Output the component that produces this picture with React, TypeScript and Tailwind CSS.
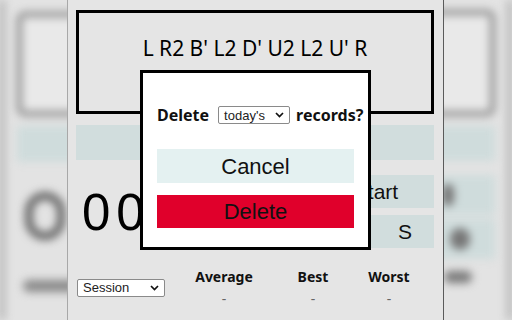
import React from "react";

const Chevron = () => (
  <svg width="9" height="6" viewBox="0 0 9 6" className="shrink-0">
    <path d="M1 1 L4.5 4.5 L8 1" fill="none" stroke="#111" strokeWidth="1.7" />
  </svg>
);

function FakeSelect({ label, w }: { label: string; w: string }) {
  return (
    <div
      className={`${w} flex items-center justify-between bg-white border border-[#8a8a8a] rounded-[2px] pl-[5px] pr-[5px] text-[13px] font-normal leading-none text-[#222]`}
      style={{ fontFamily: '"Liberation Sans", Arial, sans-serif' }}
    >
      <span>{label}</span>
      <Chevron />
    </div>
  );
}

function Stat({ title, w }: { title: string; w: string }) {
  return (
    <div className={`${w} flex flex-col items-center gap-[3px]`}>
      <div className="text-[14px] font-bold leading-[19px] text-[#111]">{title}</div>
      <div className="text-[14px] leading-[19px] text-[#666]">-</div>
    </div>
  );
}

export default function App() {
  return (
    <div
      className="w-[512px] h-[320px] flex overflow-hidden bg-[#e3e3e3]"
      style={{ fontFamily: '"Noto Sans", sans-serif' }}
    >
      {/* left blurred strip */}
      <div className="w-[67px] h-full overflow-hidden shrink-0">
        <div className="h-full flex flex-col pl-[12px] blur-[4px] border-l-[6px] border-[#b5b5b5] -ml-[1px]">
          <div className="mt-[12px] h-[104px] -mr-[12px] rounded-l-[8px] border-[5px] border-r-0 border-[#8a8a8a] bg-[#e9e9e9]" />
          <div className="mt-[10px] h-[36px] -mr-[12px] bg-[#cfdcdc]" />
          <div className="mt-[30px] ml-[8px] w-[40px] h-[48px] rounded-full border-[8px] border-[#666]" />
          <div className="mt-[40px] ml-[6px] -mr-[12px] h-[12px] rounded-full bg-[#8a8a8a]" />
        </div>
      </div>

      {/* central panel */}
      <div className="relative w-[377px] h-full shrink-0 bg-[#e5e5e5] border-l border-r border-l-[#a8a8a8] border-r-[#5a5a5a] flex flex-col pl-[8px] pr-[9px] pt-[10px]">
        <div className="h-[104px] border-[3px] border-black flex justify-center pt-[25px]">
          <div className="text-[21px] leading-none text-black whitespace-nowrap">L R2 B' L2 D' U2 L2 U' R</div>
        </div>
        <div className="mt-[11px] h-[35px] bg-[#d1dddd]" />
        <div
          className="h-[105px] flex justify-between pt-[15px]"
          style={{ fontFamily: '"Liberation Sans", Arial, sans-serif' }}
        >
          <div className="mt-[12px] ml-[6px] text-[51px] leading-none tracking-[6px] text-black">00</div>
          <div className="w-[116px] flex flex-col gap-[7px]">
            <div className="h-[33px] bg-[#d1dddd] flex items-center justify-center text-[21px] text-[#111]">Start</div>
            <div className="h-[33px] flex">
              <div className="w-1/2 bg-[#d1dddd] flex items-center justify-center text-[21px] text-[#111]">R</div>
              <div className="w-1/2 bg-[#d1dddd] flex items-center justify-center text-[21px] text-[#111]">S</div>
            </div>
          </div>
        </div>
        <div className="h-[45px] flex items-center">
          <div className="ml-[1px] h-[18px] flex">
            <FakeSelect label="Session" w="w-[88px]" />
          </div>
          <div className="ml-[19px] flex">
            <Stat title="Average" w="w-[80px]" />
            <Stat title="Best" w="w-[98px]" />
            <Stat title="Worst" w="w-[54px]" />
          </div>
        </div>

        {/* modal */}
        <div className="absolute left-[72px] top-[70px] w-[231px] h-[180px] bg-white border-[3px] border-black flex flex-col px-[14px] pt-[32px]">
          <div className="h-[20px] flex items-center whitespace-nowrap text-[16px] font-bold text-[#111]">
            <span>Delete</span>
            <div className="ml-[9px] h-[18px] flex">
              <FakeSelect label="today's" w="w-[72px]" />
            </div>
            <span className="ml-[6px]">records?</span>
          </div>
          <div
            className="mt-[24px] h-[34px] bg-[#e4f1f1] flex items-center justify-center text-[22px] text-[#111]"
            style={{ fontFamily: '"Liberation Sans", Arial, sans-serif' }}
          >
            Cancel
          </div>
          <div
            className="mt-[12px] h-[33px] bg-[#e0002b] flex items-center justify-center text-[22px] text-[#111]"
            style={{ fontFamily: '"Liberation Sans", Arial, sans-serif' }}
          >
            Delete
          </div>
        </div>
      </div>

      {/* right blurred strip */}
      <div className="w-[68px] h-full overflow-hidden shrink-0">
        <div className="h-full flex flex-col pr-[12px] blur-[4px] border-r-[6px] border-[#b5b5b5] -mr-[1px]">
          <div className="mt-[10px] h-[106px] -ml-[12px] rounded-r-[8px] border-[5px] border-l-0 border-[#8a8a8a] bg-[#e9e9e9]" />
          <div className="mt-[10px] h-[35px] -ml-[12px] bg-[#cfdcdc]" />
          <div className="mt-[14px] h-[40px] -ml-[12px] bg-[#cfdcdc] flex items-center pl-[10px]">
            <div className="w-[12px] h-[22px] rounded-full bg-[#777]" />
          </div>
          <div className="mt-[4px] h-[40px] -ml-[12px] bg-[#cfdcdc] flex items-center pl-[18px]">
            <div className="w-[20px] h-[22px] rounded-full bg-[#777]" />
          </div>
          <div className="mt-[12px] ml-[0px] w-[28px] h-[12px] rounded-full bg-[#7a7a7a]" />
        </div>
      </div>
    </div>
  );
}
